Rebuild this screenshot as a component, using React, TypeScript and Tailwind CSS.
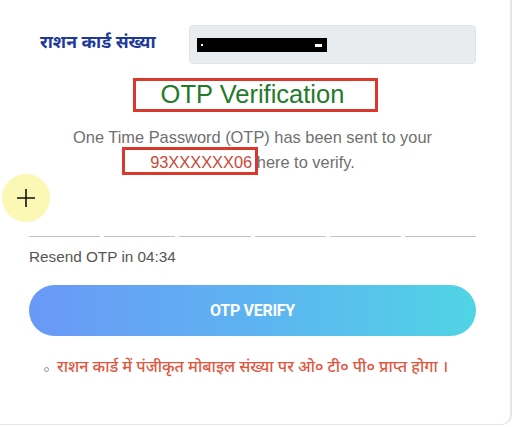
import React from "react";

export default function App() {
  const segs = [0, 1, 2, 3, 4, 5];
  return (
    <div className="w-[514px] h-[427px] bg-white overflow-hidden font-['Liberation_Sans',Arial,sans-serif]">
      <div className="relative w-[512px] h-[425px] bg-white border-r-2 border-b border-[#e6e6e6] rounded-br-[10px] pl-[29px] pr-[34px] pt-[25px]">
        {/* ration card row */}
        <div className="flex items-center h-[39px]">
          <div className="w-[160px] pl-[11px] text-[17.5px] font-bold text-[#1d3a9a] font-['Noto_Sans_Devanagari','Lohit_Devanagari','Noto_Sans',sans-serif]">
            राशन कार्ड संख्या
          </div>
          <div className="flex-1 h-[39px] bg-[#e9ecee] border border-[#dfe3e6] rounded-[4px] flex items-center pl-[7px]">
            <div className="relative w-[130px] h-[14px] bg-black">
              <div className="absolute left-[4px] top-[6px] w-[2px] h-[2px] bg-white" />
              <div className="absolute left-[118px] top-[6px] w-[7px] h-[3px] bg-white" />
            </div>
          </div>
        </div>

        {/* title */}
        <div className="flex justify-center mt-[14px] pl-[6px]">
          <div className="w-[245px] h-[34px] border-[3px] border-[#d9392c] flex items-center justify-center pr-[6px]">
            <span className="text-[25.5px] leading-none text-[#237a2a]">OTP Verification</span>
          </div>
        </div>

        {/* paragraph */}
        <div className="mt-[13px] text-center text-[16.4px] leading-[25px] text-[#6f6f6f]">
          <div>One Time Password (OTP) has been sent to your</div>
          <div>
            <span className="relative text-[#c9493b]">
              <span className="absolute left-[-28px] right-[-6px] top-[-6px] bottom-[-4px] border-[3px] border-[#d9392c]" />
              93XXXXXX06
            </span>{" "}
            here to verify.
          </div>
        </div>

        {/* cursor highlight */}
        <div className="absolute left-[2px] top-[174px] w-[48px] h-[48px] rounded-full bg-[#fbf7b4] flex items-center justify-center">
          <svg width="20" height="20" viewBox="0 0 20 20">
            <path d="M10 1V19M1 10H19" stroke="#111" strokeWidth="1.6" />
          </svg>
        </div>

        {/* otp underlines */}
        <div className="mt-[61px] flex gap-[4px]">
          {segs.map((i) => (
            <div key={i} className="flex-1 h-[1px] bg-[#c2c2c2]" />
          ))}
        </div>

        <div className="mt-[10px] text-[15.3px] leading-[20px] text-[#555]">Resend OTP in 04:34</div>

        {/* button */}
        <div className="mt-[18px] h-[51px] rounded-full bg-gradient-to-r from-[#6a98f7] via-[#5db3f1] to-[#50d4e5] flex items-center justify-center">
          <span className="font-['Roboto',sans-serif] font-bold text-[16px] text-white tracking-[-0.3px]">OTP VERIFY</span>
        </div>

        {/* note */}
        <div className="mt-[21px] pl-[15px] flex items-center gap-[8px] text-[16px] font-medium text-[#e0573f] font-['Noto_Sans_Devanagari','Lohit_Devanagari','Noto_Sans',sans-serif]">
          <span className="inline-block w-[5px] h-[5px] rounded-full border border-[#9a8f8f]" />
          <span>राशन कार्ड में पंजीकृत मोबाइल संख्या पर ओ० टी० पी० प्राप्त होगा ।</span>
        </div>
      </div>
    </div>
  );
}
